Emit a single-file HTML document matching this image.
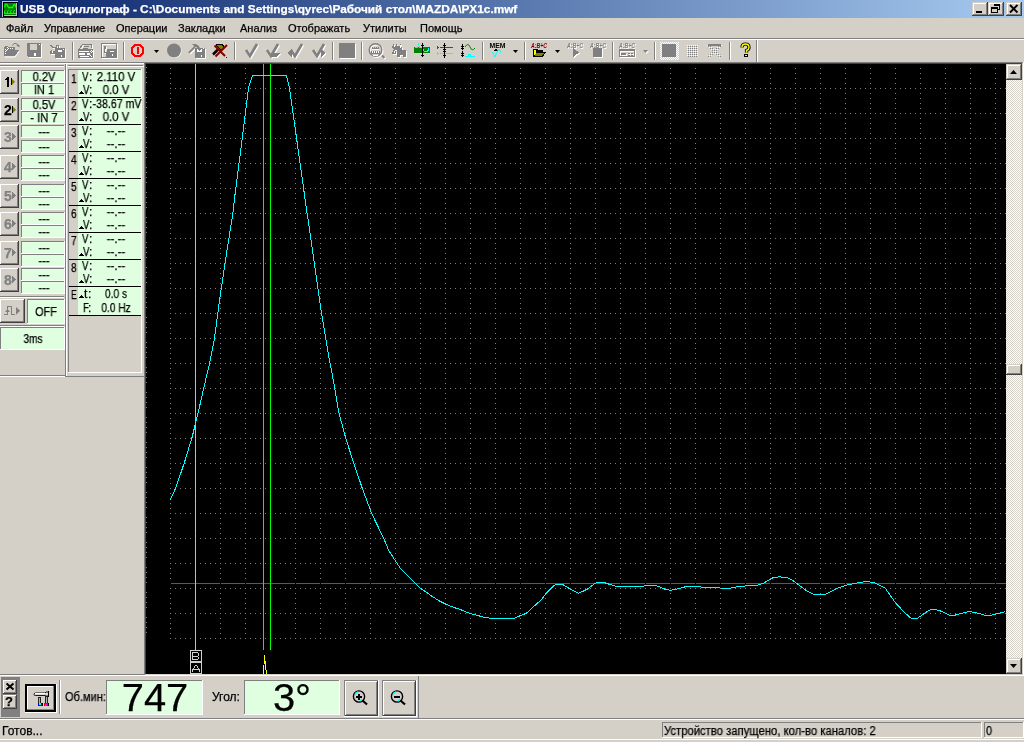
<!DOCTYPE html><html><head><meta charset="utf-8"><style>
*{margin:0;padding:0}
html,body{width:1024px;height:742px;overflow:hidden;background:#D4D0C8}
body>div,body>svg{position:absolute}
.t{position:absolute;white-space:nowrap;font-family:"Liberation Sans",sans-serif;will-change:transform;-webkit-text-stroke:0.25px currentColor}
</style></head><body><div style="left:0px;top:0px;width:1024px;height:742px;background:#D4D0C8;"></div><div style="left:0px;top:0px;width:1024px;height:18px;background:linear-gradient(to right,#0A246A,#A6CAF0);"></div><div style="left:2px;top:1px;width:16px;height:16px;background:#C0C0C0;"></div><div style="left:3px;top:2px;width:15px;height:15px;background:#000;"></div><div style="left:4px;top:3px;width:13px;height:13px;background:#C0C0C0;"></div><div style="left:4px;top:3px;width:12px;height:12px;background:#008000;"></div><svg style="left:2px;top:1px" width="16" height="16" viewBox="0 0 16 16" shape-rendering="crispEdges"><path d="M2.5 6.5l1-3h1.5l1.5 3h4l1.5-3h1l1 3" stroke="#00FF00" stroke-width="1.3" fill="none" shape-rendering="auto"/><rect x="2" y="12" width="11.5" height="1.4" fill="#00FF00"/><path d="M2.5 12.5v-2l1-1.5M5.5 12.5v-2l1-1.5M8.5 12.5v-2l1-1.5M11.5 12.5v-2l1-1.5" stroke="#00FF00" stroke-width="1" fill="none" shape-rendering="auto"/></svg><div class="t" style="left:20px;top:2px;font-size:11px;line-height:14px;color:#fff;font-weight:bold;transform:scaleX(1.074);transform-origin:0 0;">USB Осциллограф - C:\Documents and Settings\qyrec\Рабочий стол\MAZDA\PX1c.mwf</div><div style="left:972px;top:2px;width:16px;height:14px;background:#D4D0C8;"></div><div style="left:972px;top:2px;width:15px;height:1px;background:#D4D0C8;"></div><div style="left:972px;top:2px;width:1px;height:13px;background:#D4D0C8;"></div><div style="left:973px;top:3px;width:13px;height:1px;background:#FFFFFF;"></div><div style="left:973px;top:3px;width:1px;height:11px;background:#FFFFFF;"></div><div style="left:972px;top:15px;width:16px;height:1px;background:#404040;"></div><div style="left:987px;top:2px;width:1px;height:14px;background:#404040;"></div><div style="left:973px;top:14px;width:14px;height:1px;background:#808080;"></div><div style="left:986px;top:3px;width:1px;height:12px;background:#808080;"></div><div style="left:988px;top:2px;width:16px;height:14px;background:#D4D0C8;"></div><div style="left:988px;top:2px;width:15px;height:1px;background:#D4D0C8;"></div><div style="left:988px;top:2px;width:1px;height:13px;background:#D4D0C8;"></div><div style="left:989px;top:3px;width:13px;height:1px;background:#FFFFFF;"></div><div style="left:989px;top:3px;width:1px;height:11px;background:#FFFFFF;"></div><div style="left:988px;top:15px;width:16px;height:1px;background:#404040;"></div><div style="left:1003px;top:2px;width:1px;height:14px;background:#404040;"></div><div style="left:989px;top:14px;width:14px;height:1px;background:#808080;"></div><div style="left:1002px;top:3px;width:1px;height:12px;background:#808080;"></div><div style="left:1006px;top:2px;width:16px;height:14px;background:#D4D0C8;"></div><div style="left:1006px;top:2px;width:15px;height:1px;background:#D4D0C8;"></div><div style="left:1006px;top:2px;width:1px;height:13px;background:#D4D0C8;"></div><div style="left:1007px;top:3px;width:13px;height:1px;background:#FFFFFF;"></div><div style="left:1007px;top:3px;width:1px;height:11px;background:#FFFFFF;"></div><div style="left:1006px;top:15px;width:16px;height:1px;background:#404040;"></div><div style="left:1021px;top:2px;width:1px;height:14px;background:#404040;"></div><div style="left:1007px;top:14px;width:14px;height:1px;background:#808080;"></div><div style="left:1020px;top:3px;width:1px;height:12px;background:#808080;"></div><div style="left:976px;top:11px;width:6px;height:2px;background:#000;"></div><svg style="left:988px;top:2px" width="16" height="14" viewBox="0 0 16 14" shape-rendering="crispEdges"><path d="M6.5 4v-1.5h5v5h-2" stroke="#000" fill="none"/><rect x="6" y="2" width="6" height="2" fill="#000"/><rect x="3.5" y="5.5" width="6" height="5" stroke="#000" fill="none"/><rect x="3" y="5" width="7" height="2" fill="#000"/></svg><svg style="left:1006px;top:2px" width="16" height="14" viewBox="0 0 16 14" shape-rendering="crispEdges"><path d="M4 3l7.5 7.5M11.5 3l-7.5 7.5" stroke="#000" stroke-width="1.9" fill="none" shape-rendering="auto"/></svg><div class="t" style="left:6px;top:22px;font-size:11px;line-height:13px;color:#000;">Файл</div><div class="t" style="left:44px;top:22px;font-size:11px;line-height:13px;color:#000;">Управление</div><div class="t" style="left:116px;top:22px;font-size:11px;line-height:13px;color:#000;">Операции</div><div class="t" style="left:178px;top:22px;font-size:11px;line-height:13px;color:#000;">Закладки</div><div class="t" style="left:240px;top:22px;font-size:11px;line-height:13px;color:#000;">Анализ</div><div class="t" style="left:288px;top:22px;font-size:11px;line-height:13px;color:#000;">Отображать</div><div class="t" style="left:363px;top:22px;font-size:11px;line-height:13px;color:#000;">Утилиты</div><div class="t" style="left:420px;top:22px;font-size:11px;line-height:13px;color:#000;">Помощь</div><div style="left:0px;top:38px;width:1024px;height:1px;background:#808080;"></div><div style="left:0px;top:39px;width:1024px;height:1px;background:#FFFFFF;"></div><div style="left:0px;top:62px;width:1024px;height:1px;background:#808080;"></div><div style="left:0px;top:63px;width:144px;height:1px;background:#FFFFFF;"></div><div style="left:756px;top:40px;width:1px;height:22px;background:#808080;"></div><div style="left:757px;top:40px;width:1px;height:22px;background:#FFFFFF;"></div><div style="left:72px;top:42px;width:1px;height:18px;background:#808080;"></div><div style="left:73px;top:42px;width:1px;height:18px;background:#FFFFFF;"></div><div style="left:123px;top:42px;width:1px;height:18px;background:#808080;"></div><div style="left:124px;top:42px;width:1px;height:18px;background:#FFFFFF;"></div><div style="left:234px;top:42px;width:1px;height:18px;background:#808080;"></div><div style="left:235px;top:42px;width:1px;height:18px;background:#FFFFFF;"></div><div style="left:332px;top:42px;width:1px;height:18px;background:#808080;"></div><div style="left:333px;top:42px;width:1px;height:18px;background:#FFFFFF;"></div><div style="left:361px;top:42px;width:1px;height:18px;background:#808080;"></div><div style="left:362px;top:42px;width:1px;height:18px;background:#FFFFFF;"></div><div style="left:482px;top:42px;width:1px;height:18px;background:#808080;"></div><div style="left:483px;top:42px;width:1px;height:18px;background:#FFFFFF;"></div><div style="left:524px;top:42px;width:1px;height:18px;background:#808080;"></div><div style="left:525px;top:42px;width:1px;height:18px;background:#FFFFFF;"></div><div style="left:612px;top:42px;width:1px;height:18px;background:#808080;"></div><div style="left:613px;top:42px;width:1px;height:18px;background:#FFFFFF;"></div><div style="left:654px;top:42px;width:1px;height:18px;background:#808080;"></div><div style="left:655px;top:42px;width:1px;height:18px;background:#FFFFFF;"></div><div style="left:729px;top:42px;width:1px;height:18px;background:#808080;"></div><div style="left:730px;top:42px;width:1px;height:18px;background:#FFFFFF;"></div><svg style="left:0;top:0" width="760" height="64" shape-rendering="crispEdges"><defs><pattern id="dith" patternUnits="userSpaceOnUse" width="2" height="2"><rect width="2" height="2" fill="#D4D0C8"/><rect width="1" height="1" fill="#FFFFFF"/><rect x="1" y="1" width="1" height="1" fill="#FFFFFF"/></pattern><pattern id="dgr" patternUnits="userSpaceOnUse" width="2" height="2"><rect width="1" height="1" fill="#808080"/><rect x="1" y="1" width="1" height="1" fill="#FFFFFF"/></pattern></defs><path d="M5 57h10l4.5-6" stroke="#FFFFFF" fill="none" shape-rendering="auto"/><path d="M4 47h1v-1h3v1h7v3h4l-4 6h-11z" fill="#808080"/><path d="M5 49h1M7 47h1M10 48h1M12 48h1M5 51h1M5 53h1M7 49h1M6 50h1M8 48h1" stroke="#FFFFFF" fill="none"/><path d="M12.5 45.5l1.5-2h2l2.5 1.5" stroke="#808080" fill="none" shape-rendering="auto"/><path d="M16 45h3.5v2.5z" fill="#808080" shape-rendering="auto"/><g color="#FFFFFF" transform="translate(1,1)"><path d="M27 43h14v14h-13l-1-1z" fill="currentColor"/></g><g color="#808080"><path d="M27 43h14v14h-13l-1-1z" fill="currentColor"/></g><rect x="30" y="44" width="7" height="6" fill="#D4D0C8"/><rect x="34" y="53" width="2" height="3" fill="#FFFFFF"/><rect x="39" y="44" width="1" height="1" fill="#FFFFFF"/><g color="#FFFFFF" transform="translate(1,1)"><path d="M50 45h2v1h1v1h3v-2h3v3h-1v-2h-1v2h-5v-1h-1v-1h-1z" fill="currentColor"/><path d="M51 50h1v1h3v-1h1v4h-6v-3h1z" fill="currentColor"/><rect x="55" y="48" width="10" height="10" fill="currentColor"/></g><g color="#808080"><path d="M50 45h2v1h1v1h3v-2h3v3h-1v-2h-1v2h-5v-1h-1v-1h-1z" fill="currentColor"/><path d="M51 50h1v1h3v-1h1v4h-6v-3h1z" fill="currentColor"/><rect x="55" y="48" width="10" height="10" fill="currentColor"/></g><rect x="58" y="50" width="4" height="2" fill="#FFFFFF"/><rect x="63" y="49" width="1" height="1" fill="#FFFFFF"/><rect x="61" y="55" width="1" height="2" fill="#FFFFFF"/><rect x="52" y="51" width="1" height="2" fill="#FFFFFF"/><rect x="57" y="46" width="1" height="2" fill="#FFFFFF"/><rect x="80" y="58" width="13" height="1" fill="#FFFFFF"/><rect x="93" y="50" width="1" height="8" fill="#FFFFFF"/><path d="M92.5 45v3.5M80.5 50.5l3-5" stroke="#FFFFFF" fill="none"/><path d="M82 44h10v4h-1v-3h-8.4l-2.6 4h-1z" fill="#808080"/><rect x="84" y="46" width="5" height="1" fill="#808080"/><rect x="83" y="48" width="5" height="1" fill="#808080"/><rect x="78" y="49" width="15" height="9" fill="#808080"/><rect x="79" y="51" width="10" height="1" fill="#FFFFFF"/><rect x="79" y="53" width="6" height="2" fill="#FFFFFF"/><rect x="87" y="53" width="3" height="2" fill="#FFFFFF"/><rect x="80" y="56" width="9" height="1" fill="#FFFFFF"/><path d="M91 50h1M90 51h1M92 51h1M91 52h1M90 55h1M91 56h1" stroke="#FFFFFF" fill="none" transform="translate(0,0.5)"/><g color="#FFFFFF" transform="translate(1,1)"><rect x="101.5" y="43.5" width="15" height="14" fill="none" stroke="currentColor"/><path d="M107 49h9v8h-9z" fill="currentColor"/><path d="M104 46h2v3h-1v3h2v5h-1v-4h-2z" fill="currentColor"/></g><g color="#808080"><rect x="101.5" y="43.5" width="15" height="14" fill="none" stroke="currentColor"/><path d="M107 49h9v8h-9z" fill="currentColor"/><path d="M104 46h2v3h-1v3h2v5h-1v-4h-2z" fill="currentColor"/></g><rect x="110" y="51" width="4" height="1" fill="#FFFFFF"/><rect x="112" y="54" width="1" height="2" fill="#FFFFFF"/><path d="M135 45h5l3 3v5l-3 3h-5l-3-3v-5z" fill="none" stroke="#FF0000" stroke-width="2"/><rect x="137" y="47" width="2" height="7" fill="#FF0000"/><path d="M154 50h5l-2.5 3z" fill="#000" shape-rendering="auto"/><circle cx="174.5" cy="51" r="7" fill="#FFFFFF" shape-rendering="auto"/><circle cx="174" cy="50.5" r="7" fill="#808080" shape-rendering="auto"/><g color="#FFFFFF" transform="translate(1,1)"><path d="M192 44h4l3 2l1 2h-3l-1-1l-6.5 6.5l-1.3-1.3l6-6z" fill="currentColor" shape-rendering="auto"/><rect x="195" y="48" width="10" height="10" fill="currentColor"/></g><g color="#808080"><path d="M192 44h4l3 2l1 2h-3l-1-1l-6.5 6.5l-1.3-1.3l6-6z" fill="currentColor" shape-rendering="auto"/><rect x="195" y="48" width="10" height="10" fill="currentColor"/></g><path d="M197 49h1v1h1v1h1v-1h1v-1h1v3h-5z" fill="#FFFFFF"/><rect x="201" y="55" width="1" height="2" fill="#FFFFFF"/><rect x="203" y="48" width="1" height="1" fill="#FFFFFF"/><path d="M213 54.5l5-5" stroke="#000" stroke-width="2.6" shape-rendering="auto"/><path d="M213.5 54l4-4" stroke="#800000" stroke-width="0.8" stroke-dasharray="1 1" shape-rendering="auto"/><path d="M216 44h6l2 2v3l-2 1h-2l-4-4z" fill="#000"/><path d="M217 45h4l2 2v2h-2l-4-3z" fill="#808000"/><path d="M214.5 45.5l10.5 10.5M227 45l-11.5 11.5" stroke="#800000" stroke-width="2" shape-rendering="auto"/><rect x="226" y="57" width="1" height="1" fill="#800000"/><g color="#FFFFFF" transform="translate(1,1)"><path d="M246 50l4 6l7-12" stroke="currentColor" stroke-width="2.6" fill="none" shape-rendering="auto"/></g><g color="#808080"><path d="M246 50l4 6l7-12" stroke="currentColor" stroke-width="2.6" fill="none" shape-rendering="auto"/></g><g color="#FFFFFF" transform="translate(1,1)"><path d="M267 50l4 6l7-12" stroke="currentColor" stroke-width="2.6" fill="none" shape-rendering="auto"/><path d="M271 53h9l-3 4h-6z" fill="currentColor"/></g><g color="#808080"><path d="M267 50l4 6l7-12" stroke="currentColor" stroke-width="2.6" fill="none" shape-rendering="auto"/><path d="M271 53h9l-3 4h-6z" fill="currentColor"/></g><g color="#FFFFFF" transform="translate(1,1)"><path d="M291 50l4 6l7-12" stroke="currentColor" stroke-width="2.6" fill="none" shape-rendering="auto"/><path d="M287 53l5-4v8z" fill="currentColor"/></g><g color="#808080"><path d="M291 50l4 6l7-12" stroke="currentColor" stroke-width="2.6" fill="none" shape-rendering="auto"/><path d="M287 53l5-4v8z" fill="currentColor"/></g><g color="#FFFFFF" transform="translate(1,1)"><path d="M313 50l4 6l7-12" stroke="currentColor" stroke-width="2.6" fill="none" shape-rendering="auto"/><path d="M321 49l5 4l-5 4z" fill="currentColor"/></g><g color="#808080"><path d="M313 50l4 6l7-12" stroke="currentColor" stroke-width="2.6" fill="none" shape-rendering="auto"/><path d="M321 49l5 4l-5 4z" fill="currentColor"/></g><g color="#FFFFFF" transform="translate(1,1)"><rect x="339" y="43" width="16" height="15" fill="currentColor"/></g><g color="#808080"><rect x="339" y="43" width="16" height="15" fill="currentColor"/></g><g color="#FFFFFF" transform="translate(1,1)"><circle cx="375.5" cy="50" r="6.3" fill="none" stroke="currentColor" stroke-width="1.4" shape-rendering="auto"/><path d="M382 55.5l2.5 2.5" stroke="currentColor" stroke-width="2" shape-rendering="auto"/></g><g color="#808080"><circle cx="375.5" cy="50" r="6.3" fill="none" stroke="currentColor" stroke-width="1.4" shape-rendering="auto"/><path d="M382 55.5l2.5 2.5" stroke="currentColor" stroke-width="2" shape-rendering="auto"/></g><path d="M372 46.5h1v1h1v-1h1v1h1v-1h1v1h1v-1h1v2h-7z" fill="#808080"/><rect x="372" y="49" width="7" height="1" fill="#FFFFFF"/><path d="M371 51h9v3h-9z" fill="#808080"/><path d="M372.5 51v2M374.5 51v2M376.5 51v2M378.5 51v2" stroke="#FFFFFF"/><rect x="373" y="55" width="5" height="1" fill="#FFFFFF"/><g color="#FFFFFF" transform="translate(1,1)"><path d="M393 44h1v2h2v-2h1v2h3v-2h1v3h1v3h4v7h-3v-2h-3v2h-3v-7h-3v-1h-1v-1h-1z" fill="currentColor"/><path d="M393 50h2v1h1v3h-4v-2h1z" fill="currentColor"/></g><g color="#808080"><path d="M393 44h1v2h2v-2h1v2h3v-2h1v3h1v3h4v7h-3v-2h-3v2h-3v-7h-3v-1h-1v-1h-1z" fill="currentColor"/><path d="M393 50h2v1h1v3h-4v-2h1z" fill="currentColor"/></g><path d="M394 46.5h1M400.5 45v3M394.5 51v2" stroke="#FFFFFF"/><rect x="414" y="47" width="16" height="6" fill="#008000"/><path d="M414.5 47.5h3l1-3l1 3h2l3 4h3l1.5 -3" stroke="#00FFFF" fill="none"/><path d="M422.5 43v14M421 45h3M421 55h3" stroke="#000" fill="none"/><path d="M437 46v3l2-1.5z" fill="#008000"/><rect x="440" y="47" width="13" height="1" fill="#008000"/><path d="M437 52v3l2-1.5z" fill="#00FFFF"/><rect x="440" y="53" width="13" height="1" fill="#00FFFF"/><path d="M444.5 43v15M443 45h3M443 49h3M443 51h3M443 55h3" stroke="#000" fill="none"/><path d="M462.5 44v6M462.5 51v6M461 46h3M461 48h3M461 53h3M461 55h3" stroke="#000" fill="none"/><path d="M465 47q3-5 5 0t5 1" stroke="#008000" fill="none" shape-rendering="auto"/><path d="M465 56.5h3v-2h2v2h5" stroke="#00FFFF" fill="none"/><text x="489.5" y="48" font-family="Liberation Sans" font-size="6.5" font-weight="bold" fill="#000" textLength="16" lengthAdjust="spacingAndGlyphs">MEM</text><path d="M493 51h5l-2.5-2.5z" fill="#000"/><path d="M492.5 52l2.5 5l2-5l2 -3l2 4" stroke="#00FFFF" fill="none" shape-rendering="auto"/><path d="M513 50h5l-2.5 3z" fill="#000" shape-rendering="auto"/><text x="531" y="48" font-family="Liberation Sans" font-size="6.5" font-weight="bold" font-style="italic" fill="#800000" textLength="16" lengthAdjust="spacingAndGlyphs">A:B+C</text><path d="M533 49h4l1 1h5v2h3l-3 5h-10z" fill="#000"/><path d="M534 50h2v5h-2z" fill="#FFFF00"/><path d="M536 53h8l-2 3h-7z" fill="#808000"/><path d="M555 50h5l-2.5 3z" fill="#000" shape-rendering="auto"/><g color="#FFFFFF" transform="translate(1,1)"><text x="567" y="48" font-family="Liberation Sans" font-size="6.5" font-weight="bold" font-style="italic" fill="currentColor" textLength="16" lengthAdjust="spacingAndGlyphs">A:B+C</text><path d="M573 48l6 4.5l-6 4.5z" fill="currentColor"/></g><g color="#808080"><text x="567" y="48" font-family="Liberation Sans" font-size="6.5" font-weight="bold" font-style="italic" fill="currentColor" textLength="16" lengthAdjust="spacingAndGlyphs">A:B+C</text><path d="M573 48l6 4.5l-6 4.5z" fill="currentColor"/></g><g color="#FFFFFF" transform="translate(1,1)"><text x="590" y="48" font-family="Liberation Sans" font-size="6.5" font-weight="bold" font-style="italic" fill="currentColor" textLength="16" lengthAdjust="spacingAndGlyphs">A:B+C</text><rect x="593" y="48" width="9" height="9" fill="currentColor"/></g><g color="#808080"><text x="590" y="48" font-family="Liberation Sans" font-size="6.5" font-weight="bold" font-style="italic" fill="currentColor" textLength="16" lengthAdjust="spacingAndGlyphs">A:B+C</text><rect x="593" y="48" width="9" height="9" fill="currentColor"/></g><g color="#FFFFFF" transform="translate(1,1)"><text x="619" y="48" font-family="Liberation Sans" font-size="6.5" font-weight="bold" font-style="italic" fill="currentColor" textLength="16" lengthAdjust="spacingAndGlyphs">A:B+C</text><rect x="619.5" y="49.5" width="15" height="7" fill="none" stroke="currentColor"/><rect x="619" y="49" width="16" height="2" fill="currentColor"/><rect x="621" y="53" width="5" height="2" fill="currentColor"/><path d="M628 53h2M631 53h2M628 55h2M631 55h2" stroke="currentColor"/></g><g color="#808080"><text x="619" y="48" font-family="Liberation Sans" font-size="6.5" font-weight="bold" font-style="italic" fill="currentColor" textLength="16" lengthAdjust="spacingAndGlyphs">A:B+C</text><rect x="619.5" y="49.5" width="15" height="7" fill="none" stroke="currentColor"/><rect x="619" y="49" width="16" height="2" fill="currentColor"/><rect x="621" y="53" width="5" height="2" fill="currentColor"/><path d="M628 53h2M631 53h2M628 55h2M631 55h2" stroke="currentColor"/></g><g color="#FFFFFF" transform="translate(1,1)"><path d="M643 50h5l-2.5 3z" fill="currentColor" shape-rendering="auto"/></g><g color="#808080"><path d="M643 50h5l-2.5 3z" fill="currentColor" shape-rendering="auto"/></g><rect x="660" y="42" width="19" height="18" fill="url(#dith)"/><rect x="662" y="44" width="14" height="13" fill="#808080"/><rect x="687" y="45" width="11" height="12" fill="url(#dgr)"/><path d="M708 45l13 12M721 45l-13 12" stroke="url(#dgr)" stroke-width="3" shape-rendering="auto"/><path d="M708 45h13" stroke="#808080" stroke-width="2"/><path d="M742 47.5q0-3.5 3.5-3.5t3.5 3.5q0 2-2.5 3v2" stroke="#000" stroke-width="3.2" fill="none" shape-rendering="auto"/><path d="M742 47.5q0-3.5 3.5-3.5t3.5 3.5q0 2-2.5 3v2" stroke="#FFFF00" stroke-width="1.4" fill="none" shape-rendering="auto"/><rect x="744" y="54" width="4" height="3" fill="#000"/><rect x="745" y="55" width="2" height="1" fill="#FFFF00"/></svg><div style="left:144px;top:62px;width:880px;height:1px;background:#808080;"></div><div style="left:144px;top:62px;width:1px;height:613px;background:#808080;"></div><div style="left:145px;top:63px;width:878px;height:1px;background:#404040;"></div><div style="left:145px;top:63px;width:1px;height:611px;background:#404040;"></div><div style="left:146px;top:64px;width:860px;height:610px;background:#000;"></div><div style="left:145px;top:674px;width:878px;height:1px;background:#D4D0C8;"></div><div style="left:144px;top:675px;width:880px;height:1px;background:#FFFFFF;"></div><div style="left:1022px;top:63px;width:1px;height:612px;background:#D4D0C8;"></div><div style="left:1023px;top:62px;width:1px;height:614px;background:#FFFFFF;"></div><svg style="left:0;top:0" width="1024" height="742" shape-rendering="crispEdges"><defs><pattern id="ph" patternUnits="userSpaceOnUse" x="170" y="88" width="5" height="25"><rect width="1" height="1" fill="#808080"/></pattern><pattern id="pv" patternUnits="userSpaceOnUse" x="170" y="68" width="25" height="5"><rect width="1" height="1" fill="#808080"/></pattern><pattern id="pl" patternUnits="userSpaceOnUse" x="146" y="67" width="1" height="25"><rect y="0" width="1" height="1" fill="#808080"/><rect y="5" width="1" height="1" fill="#808080"/><rect y="10" width="1" height="1" fill="#808080"/><rect y="15" width="1" height="1" fill="#808080"/></pattern><pattern id="pc" patternUnits="userSpaceOnUse" x="195" y="68" width="1" height="5"><rect width="1" height="1" fill="#00FFFF"/></pattern></defs><rect x="170" y="88" width="836" height="551" fill="url(#ph)"/><rect x="170" y="68" width="826" height="571" fill="url(#pv)"/><rect x="146" y="67" width="1" height="566" fill="url(#pl)"/><rect x="171" y="583" width="835" height="1" fill="#008080"/><rect x="170" y="583" width="1" height="1" fill="#000"/><rect x="195" y="583" width="1" height="1" fill="#000"/><rect x="220" y="583" width="1" height="1" fill="#000"/><rect x="245" y="583" width="1" height="1" fill="#000"/><rect x="270" y="583" width="1" height="1" fill="#000"/><rect x="295" y="583" width="1" height="1" fill="#000"/><rect x="320" y="583" width="1" height="1" fill="#000"/><rect x="345" y="583" width="1" height="1" fill="#000"/><rect x="370" y="583" width="1" height="1" fill="#000"/><rect x="395" y="583" width="1" height="1" fill="#000"/><rect x="420" y="583" width="1" height="1" fill="#000"/><rect x="445" y="583" width="1" height="1" fill="#000"/><rect x="470" y="583" width="1" height="1" fill="#000"/><rect x="495" y="583" width="1" height="1" fill="#000"/><rect x="520" y="583" width="1" height="1" fill="#000"/><rect x="545" y="583" width="1" height="1" fill="#000"/><rect x="570" y="583" width="1" height="1" fill="#000"/><rect x="595" y="583" width="1" height="1" fill="#000"/><rect x="620" y="583" width="1" height="1" fill="#000"/><rect x="645" y="583" width="1" height="1" fill="#000"/><rect x="670" y="583" width="1" height="1" fill="#000"/><rect x="695" y="583" width="1" height="1" fill="#000"/><rect x="720" y="583" width="1" height="1" fill="#000"/><rect x="745" y="583" width="1" height="1" fill="#000"/><rect x="770" y="583" width="1" height="1" fill="#000"/><rect x="795" y="583" width="1" height="1" fill="#000"/><rect x="820" y="583" width="1" height="1" fill="#000"/><rect x="845" y="583" width="1" height="1" fill="#000"/><rect x="870" y="583" width="1" height="1" fill="#000"/><rect x="895" y="583" width="1" height="1" fill="#000"/><rect x="920" y="583" width="1" height="1" fill="#000"/><rect x="945" y="583" width="1" height="1" fill="#000"/><rect x="970" y="583" width="1" height="1" fill="#000"/><rect x="995" y="583" width="1" height="1" fill="#000"/><rect x="195" y="64" width="1" height="586" fill="#C0C0C0"/><rect x="195" y="68" width="1" height="571" fill="url(#pc)"/><rect x="263" y="64" width="1" height="586" fill="#00FF00"/><rect x="270" y="64" width="1" height="586" fill="#00FF00"/><polyline points="170.1,500.1 175.7,488.0 184.2,463.1 191.9,438.0 198.1,413.0 203.7,388.2 209.7,362.8 214.5,338.2 219.6,300.0 225.5,260.0 232.9,213.0 234.3,200.0 243.3,130.0 248.5,88.0 252.6,75.5 286.5,75.5 289.5,88.0 295.4,130.0 305.2,200.0 321.5,313.0 329.4,360.0 333.3,380.0 338.9,412.8 346.0,439.2 354.0,463.8 362.3,488.3 371.7,513.6 383.8,538.5 388.5,550.0 395.1,560.4 400.8,568.9 408.3,576.4 415.4,583.5 419.6,587.7 425.3,591.5 431.9,596.2 438.5,600.5 446.0,604.2 453.6,607.4 460.0,609.4 469.3,613.2 483.9,617.2 490.5,618.3 514.0,618.3 526.4,613.2 535.2,605.2 541.0,600.0 545.5,594.2 554.3,585.4 556.4,584.2 562.3,584.2 568.9,588.3 578.4,593.4 587.3,589.2 594.6,583.6 597.6,582.3 603.4,582.3 615.2,586.2 643.7,586.2 645.2,585.2 655.4,585.2 665.0,589.2 670.8,590.3 682.5,587.7 687.0,586.2 698.6,586.2 701.6,587.4 717.7,587.4 720.0,588.0 730.3,588.1 739.0,586.5 758.0,585.0 764.0,582.9 772.7,577.9 779.3,576.7 787.4,577.9 791.8,579.6 797.6,584.0 806.4,590.6 813.7,594.3 825.5,594.3 837.2,588.4 846.0,585.2 860.6,582.3 867.3,581.4 874.6,582.9 884.9,587.7 895.2,602.4 903.9,611.9 911.3,618.5 917.1,618.5 928.8,610.4 933.2,609.2 939.1,610.4 949.4,615.1 955.2,615.1 965.5,612.2 969.9,611.6 975.7,612.6 984.5,615.1 991.8,615.1 1005.5,611.6" fill="none" stroke="#00FFFF" stroke-width="1" shape-rendering="crispEdges"/><rect x="190.5" y="650.5" width="11" height="11" rx="1" fill="none" stroke="#D0D0D0"/><rect x="190.5" y="662.5" width="11" height="11" rx="1" fill="none" stroke="#D0D0D0"/><path d="M192.5 652v8M192 652.5h5.5M192 656.5h5.5M192 659.5h5.5M198.5 653v3M198.5 657v2" stroke="#D0D0D0" fill="none"/><path d="M192.5 672v-1.5l3-5.5h1l3 5.5v1.5M193 669.5h6" stroke="#D0D0D0" fill="none"/><path d="M264.5 655v9M265.5 661v9M263.5 665v9M266.5 670v4" stroke="#FFFF00" fill="none"/></svg><div style="left:1006px;top:64px;width:16px;height:610px;background:repeating-conic-gradient(#FFFFFF 0 25%,#D4D0C8 0 50%) 0 0/2px 2px;"></div><div style="left:1006px;top:64px;width:16px;height:16px;background:#D4D0C8;"></div><div style="left:1006px;top:64px;width:15px;height:1px;background:#D4D0C8;"></div><div style="left:1006px;top:64px;width:1px;height:15px;background:#D4D0C8;"></div><div style="left:1007px;top:65px;width:13px;height:1px;background:#FFFFFF;"></div><div style="left:1007px;top:65px;width:1px;height:13px;background:#FFFFFF;"></div><div style="left:1006px;top:79px;width:16px;height:1px;background:#404040;"></div><div style="left:1021px;top:64px;width:1px;height:16px;background:#404040;"></div><div style="left:1007px;top:78px;width:14px;height:1px;background:#808080;"></div><div style="left:1020px;top:65px;width:1px;height:14px;background:#808080;"></div><svg style="left:1006px;top:64px" width="16" height="16" viewBox="0 0 16 16" shape-rendering="crispEdges"><path d="M4 10h7l-3.5-4z" fill="#000" shape-rendering="auto"/></svg><div style="left:1006px;top:364px;width:16px;height:11px;background:#D4D0C8;"></div><div style="left:1006px;top:364px;width:15px;height:1px;background:#D4D0C8;"></div><div style="left:1006px;top:364px;width:1px;height:10px;background:#D4D0C8;"></div><div style="left:1007px;top:365px;width:13px;height:1px;background:#FFFFFF;"></div><div style="left:1007px;top:365px;width:1px;height:8px;background:#FFFFFF;"></div><div style="left:1006px;top:374px;width:16px;height:1px;background:#404040;"></div><div style="left:1021px;top:364px;width:1px;height:11px;background:#404040;"></div><div style="left:1007px;top:373px;width:14px;height:1px;background:#808080;"></div><div style="left:1020px;top:365px;width:1px;height:9px;background:#808080;"></div><div style="left:1006px;top:658px;width:16px;height:16px;background:#D4D0C8;"></div><div style="left:1006px;top:658px;width:15px;height:1px;background:#D4D0C8;"></div><div style="left:1006px;top:658px;width:1px;height:15px;background:#D4D0C8;"></div><div style="left:1007px;top:659px;width:13px;height:1px;background:#FFFFFF;"></div><div style="left:1007px;top:659px;width:1px;height:13px;background:#FFFFFF;"></div><div style="left:1006px;top:673px;width:16px;height:1px;background:#404040;"></div><div style="left:1021px;top:658px;width:1px;height:16px;background:#404040;"></div><div style="left:1007px;top:672px;width:14px;height:1px;background:#808080;"></div><div style="left:1020px;top:659px;width:1px;height:14px;background:#808080;"></div><svg style="left:1006px;top:658px" width="16" height="16" viewBox="0 0 16 16" shape-rendering="crispEdges"><path d="M4 6h7l-3.5 4z" fill="#000" shape-rendering="auto"/></svg><div style="left:0px;top:65px;width:64px;height:1px;background:#808080;"></div><div style="left:0px;top:66px;width:64px;height:1px;background:#FFFFFF;"></div><div style="left:68px;top:65px;width:75px;height:1px;background:#808080;"></div><div style="left:68px;top:66px;width:76px;height:1px;background:#FFFFFF;"></div><div style="left:65px;top:64px;width:1px;height:312px;background:#808080;"></div><div style="left:66px;top:64px;width:1px;height:312px;background:#FFFFFF;"></div><div style="left:0px;top:70px;width:19px;height:24px;background:#D4D0C8;"></div><div style="left:0px;top:70px;width:18px;height:1px;background:#FFFFFF;"></div><div style="left:0px;top:70px;width:1px;height:23px;background:#FFFFFF;"></div><div style="left:0px;top:93px;width:19px;height:1px;background:#404040;"></div><div style="left:18px;top:70px;width:1px;height:24px;background:#404040;"></div><div style="left:1px;top:92px;width:17px;height:1px;background:#808080;"></div><div style="left:17px;top:71px;width:1px;height:22px;background:#808080;"></div><svg style="left:0px;top:70px" width="19" height="24" viewBox="0 0 19 24" shape-rendering="crispEdges"><rect x="7" y="7" width="2" height="10" fill="#000"/><rect x="5" y="9" width="2" height="1" fill="#000"/><rect x="6" y="8" width="1" height="1" fill="#000"/></svg><svg style="left:11px;top:78px" width="5" height="8" viewBox="0 0 5 8" shape-rendering="crispEdges"><path d="M0.5 0v7" stroke="#000"/><path d="M1 1l3.2 2.8l-3.2 3z" fill="#808000" shape-rendering="auto"/></svg><div style="left:21px;top:70px;width:44px;height:13px;background:#E0FFE0;"></div><div style="left:21px;top:70px;width:43px;height:1px;background:#808080;"></div><div style="left:21px;top:70px;width:1px;height:12px;background:#808080;"></div><div style="left:21px;top:82px;width:44px;height:1px;background:#FFFFFF;"></div><div style="left:64px;top:70px;width:1px;height:13px;background:#FFFFFF;"></div><div style="left:21px;top:83px;width:44px;height:13px;background:#E0FFE0;"></div><div style="left:21px;top:83px;width:43px;height:1px;background:#808080;"></div><div style="left:21px;top:83px;width:1px;height:12px;background:#808080;"></div><div style="left:21px;top:95px;width:44px;height:1px;background:#FFFFFF;"></div><div style="left:64px;top:83px;width:1px;height:13px;background:#FFFFFF;"></div><div class="t" style="left:3.5px;top:70px;width:80px;text-align:center;font-size:12px;line-height:14px;color:#000;transform:scaleX(0.93);">0.2V</div><div class="t" style="left:3.5px;top:83px;width:80px;text-align:center;font-size:12px;line-height:14px;color:#000;transform:scaleX(0.93);">IN 1</div><div style="left:0px;top:98px;width:19px;height:24px;background:#D4D0C8;"></div><div style="left:0px;top:98px;width:18px;height:1px;background:#FFFFFF;"></div><div style="left:0px;top:98px;width:1px;height:23px;background:#FFFFFF;"></div><div style="left:0px;top:121px;width:19px;height:1px;background:#404040;"></div><div style="left:18px;top:98px;width:1px;height:24px;background:#404040;"></div><div style="left:1px;top:120px;width:17px;height:1px;background:#808080;"></div><div style="left:17px;top:99px;width:1px;height:22px;background:#808080;"></div><div class="t" style="left:4px;top:102px;font-size:14px;line-height:16px;color:#000;font-weight:bold;">2</div><svg style="left:12px;top:106px" width="5" height="8" viewBox="0 0 5 8" shape-rendering="crispEdges"><path d="M0.5 0v7" stroke="#000"/><path d="M1 1l3.2 2.8l-3.2 3z" fill="#808000" shape-rendering="auto"/></svg><div style="left:21px;top:98px;width:44px;height:13px;background:#E0FFE0;"></div><div style="left:21px;top:98px;width:43px;height:1px;background:#808080;"></div><div style="left:21px;top:98px;width:1px;height:12px;background:#808080;"></div><div style="left:21px;top:110px;width:44px;height:1px;background:#FFFFFF;"></div><div style="left:64px;top:98px;width:1px;height:13px;background:#FFFFFF;"></div><div style="left:21px;top:111px;width:44px;height:13px;background:#E0FFE0;"></div><div style="left:21px;top:111px;width:43px;height:1px;background:#808080;"></div><div style="left:21px;top:111px;width:1px;height:12px;background:#808080;"></div><div style="left:21px;top:123px;width:44px;height:1px;background:#FFFFFF;"></div><div style="left:64px;top:111px;width:1px;height:13px;background:#FFFFFF;"></div><div class="t" style="left:3.5px;top:98px;width:80px;text-align:center;font-size:12px;line-height:14px;color:#000;transform:scaleX(0.93);">0.5V</div><div class="t" style="left:3.5px;top:111px;width:80px;text-align:center;font-size:12px;line-height:14px;color:#000;transform:scaleX(0.93);">- IN 7</div><div style="left:0px;top:125px;width:19px;height:24px;background:#D4D0C8;"></div><div style="left:0px;top:125px;width:18px;height:1px;background:#FFFFFF;"></div><div style="left:0px;top:125px;width:1px;height:23px;background:#FFFFFF;"></div><div style="left:0px;top:148px;width:19px;height:1px;background:#404040;"></div><div style="left:18px;top:125px;width:1px;height:24px;background:#404040;"></div><div style="left:1px;top:147px;width:17px;height:1px;background:#808080;"></div><div style="left:17px;top:126px;width:1px;height:22px;background:#808080;"></div><div class="t" style="left:4px;top:129px;font-size:14px;line-height:16px;color:#808080;font-weight:bold;">3</div><svg style="left:12px;top:133px" width="5" height="7" viewBox="0 0 5 7" shape-rendering="crispEdges"><path d="M0 0l4 3.5l-4 3.5z" fill="#808080"/></svg><div style="left:21px;top:125px;width:44px;height:13px;background:#E0FFE0;"></div><div style="left:21px;top:125px;width:43px;height:1px;background:#808080;"></div><div style="left:21px;top:125px;width:1px;height:12px;background:#808080;"></div><div style="left:21px;top:137px;width:44px;height:1px;background:#FFFFFF;"></div><div style="left:64px;top:125px;width:1px;height:13px;background:#FFFFFF;"></div><div style="left:21px;top:140px;width:44px;height:13px;background:#E0FFE0;"></div><div style="left:21px;top:140px;width:43px;height:1px;background:#808080;"></div><div style="left:21px;top:140px;width:1px;height:12px;background:#808080;"></div><div style="left:21px;top:152px;width:44px;height:1px;background:#FFFFFF;"></div><div style="left:64px;top:140px;width:1px;height:13px;background:#FFFFFF;"></div><div class="t" style="left:3.5px;top:125px;width:80px;text-align:center;font-size:12px;line-height:14px;color:#000;transform:scaleX(0.93);">---</div><div class="t" style="left:3.5px;top:140px;width:80px;text-align:center;font-size:12px;line-height:14px;color:#000;transform:scaleX(0.93);">---</div><div style="left:0px;top:155px;width:19px;height:24px;background:#D4D0C8;"></div><div style="left:0px;top:155px;width:18px;height:1px;background:#FFFFFF;"></div><div style="left:0px;top:155px;width:1px;height:23px;background:#FFFFFF;"></div><div style="left:0px;top:178px;width:19px;height:1px;background:#404040;"></div><div style="left:18px;top:155px;width:1px;height:24px;background:#404040;"></div><div style="left:1px;top:177px;width:17px;height:1px;background:#808080;"></div><div style="left:17px;top:156px;width:1px;height:22px;background:#808080;"></div><div class="t" style="left:4px;top:159px;font-size:14px;line-height:16px;color:#808080;font-weight:bold;">4</div><svg style="left:12px;top:163px" width="5" height="7" viewBox="0 0 5 7" shape-rendering="crispEdges"><path d="M0 0l4 3.5l-4 3.5z" fill="#808080"/></svg><div style="left:21px;top:155px;width:44px;height:13px;background:#E0FFE0;"></div><div style="left:21px;top:155px;width:43px;height:1px;background:#808080;"></div><div style="left:21px;top:155px;width:1px;height:12px;background:#808080;"></div><div style="left:21px;top:167px;width:44px;height:1px;background:#FFFFFF;"></div><div style="left:64px;top:155px;width:1px;height:13px;background:#FFFFFF;"></div><div style="left:21px;top:168px;width:44px;height:13px;background:#E0FFE0;"></div><div style="left:21px;top:168px;width:43px;height:1px;background:#808080;"></div><div style="left:21px;top:168px;width:1px;height:12px;background:#808080;"></div><div style="left:21px;top:180px;width:44px;height:1px;background:#FFFFFF;"></div><div style="left:64px;top:168px;width:1px;height:13px;background:#FFFFFF;"></div><div class="t" style="left:3.5px;top:155px;width:80px;text-align:center;font-size:12px;line-height:14px;color:#000;transform:scaleX(0.93);">---</div><div class="t" style="left:3.5px;top:168px;width:80px;text-align:center;font-size:12px;line-height:14px;color:#000;transform:scaleX(0.93);">---</div><div style="left:0px;top:184px;width:19px;height:24px;background:#D4D0C8;"></div><div style="left:0px;top:184px;width:18px;height:1px;background:#FFFFFF;"></div><div style="left:0px;top:184px;width:1px;height:23px;background:#FFFFFF;"></div><div style="left:0px;top:207px;width:19px;height:1px;background:#404040;"></div><div style="left:18px;top:184px;width:1px;height:24px;background:#404040;"></div><div style="left:1px;top:206px;width:17px;height:1px;background:#808080;"></div><div style="left:17px;top:185px;width:1px;height:22px;background:#808080;"></div><div class="t" style="left:4px;top:188px;font-size:14px;line-height:16px;color:#808080;font-weight:bold;">5</div><svg style="left:12px;top:192px" width="5" height="7" viewBox="0 0 5 7" shape-rendering="crispEdges"><path d="M0 0l4 3.5l-4 3.5z" fill="#808080"/></svg><div style="left:21px;top:184px;width:44px;height:13px;background:#E0FFE0;"></div><div style="left:21px;top:184px;width:43px;height:1px;background:#808080;"></div><div style="left:21px;top:184px;width:1px;height:12px;background:#808080;"></div><div style="left:21px;top:196px;width:44px;height:1px;background:#FFFFFF;"></div><div style="left:64px;top:184px;width:1px;height:13px;background:#FFFFFF;"></div><div style="left:21px;top:197px;width:44px;height:13px;background:#E0FFE0;"></div><div style="left:21px;top:197px;width:43px;height:1px;background:#808080;"></div><div style="left:21px;top:197px;width:1px;height:12px;background:#808080;"></div><div style="left:21px;top:209px;width:44px;height:1px;background:#FFFFFF;"></div><div style="left:64px;top:197px;width:1px;height:13px;background:#FFFFFF;"></div><div class="t" style="left:3.5px;top:184px;width:80px;text-align:center;font-size:12px;line-height:14px;color:#000;transform:scaleX(0.93);">---</div><div class="t" style="left:3.5px;top:197px;width:80px;text-align:center;font-size:12px;line-height:14px;color:#000;transform:scaleX(0.93);">---</div><div style="left:0px;top:212px;width:19px;height:24px;background:#D4D0C8;"></div><div style="left:0px;top:212px;width:18px;height:1px;background:#FFFFFF;"></div><div style="left:0px;top:212px;width:1px;height:23px;background:#FFFFFF;"></div><div style="left:0px;top:235px;width:19px;height:1px;background:#404040;"></div><div style="left:18px;top:212px;width:1px;height:24px;background:#404040;"></div><div style="left:1px;top:234px;width:17px;height:1px;background:#808080;"></div><div style="left:17px;top:213px;width:1px;height:22px;background:#808080;"></div><div class="t" style="left:4px;top:216px;font-size:14px;line-height:16px;color:#808080;font-weight:bold;">6</div><svg style="left:12px;top:220px" width="5" height="7" viewBox="0 0 5 7" shape-rendering="crispEdges"><path d="M0 0l4 3.5l-4 3.5z" fill="#808080"/></svg><div style="left:21px;top:212px;width:44px;height:13px;background:#E0FFE0;"></div><div style="left:21px;top:212px;width:43px;height:1px;background:#808080;"></div><div style="left:21px;top:212px;width:1px;height:12px;background:#808080;"></div><div style="left:21px;top:224px;width:44px;height:1px;background:#FFFFFF;"></div><div style="left:64px;top:212px;width:1px;height:13px;background:#FFFFFF;"></div><div style="left:21px;top:225px;width:44px;height:13px;background:#E0FFE0;"></div><div style="left:21px;top:225px;width:43px;height:1px;background:#808080;"></div><div style="left:21px;top:225px;width:1px;height:12px;background:#808080;"></div><div style="left:21px;top:237px;width:44px;height:1px;background:#FFFFFF;"></div><div style="left:64px;top:225px;width:1px;height:13px;background:#FFFFFF;"></div><div class="t" style="left:3.5px;top:212px;width:80px;text-align:center;font-size:12px;line-height:14px;color:#000;transform:scaleX(0.93);">---</div><div class="t" style="left:3.5px;top:225px;width:80px;text-align:center;font-size:12px;line-height:14px;color:#000;transform:scaleX(0.93);">---</div><div style="left:0px;top:241px;width:19px;height:24px;background:#D4D0C8;"></div><div style="left:0px;top:241px;width:18px;height:1px;background:#FFFFFF;"></div><div style="left:0px;top:241px;width:1px;height:23px;background:#FFFFFF;"></div><div style="left:0px;top:264px;width:19px;height:1px;background:#404040;"></div><div style="left:18px;top:241px;width:1px;height:24px;background:#404040;"></div><div style="left:1px;top:263px;width:17px;height:1px;background:#808080;"></div><div style="left:17px;top:242px;width:1px;height:22px;background:#808080;"></div><div class="t" style="left:4px;top:245px;font-size:14px;line-height:16px;color:#808080;font-weight:bold;">7</div><svg style="left:12px;top:249px" width="5" height="7" viewBox="0 0 5 7" shape-rendering="crispEdges"><path d="M0 0l4 3.5l-4 3.5z" fill="#808080"/></svg><div style="left:21px;top:241px;width:44px;height:13px;background:#E0FFE0;"></div><div style="left:21px;top:241px;width:43px;height:1px;background:#808080;"></div><div style="left:21px;top:241px;width:1px;height:12px;background:#808080;"></div><div style="left:21px;top:253px;width:44px;height:1px;background:#FFFFFF;"></div><div style="left:64px;top:241px;width:1px;height:13px;background:#FFFFFF;"></div><div style="left:21px;top:254px;width:44px;height:13px;background:#E0FFE0;"></div><div style="left:21px;top:254px;width:43px;height:1px;background:#808080;"></div><div style="left:21px;top:254px;width:1px;height:12px;background:#808080;"></div><div style="left:21px;top:266px;width:44px;height:1px;background:#FFFFFF;"></div><div style="left:64px;top:254px;width:1px;height:13px;background:#FFFFFF;"></div><div class="t" style="left:3.5px;top:241px;width:80px;text-align:center;font-size:12px;line-height:14px;color:#000;transform:scaleX(0.93);">---</div><div class="t" style="left:3.5px;top:254px;width:80px;text-align:center;font-size:12px;line-height:14px;color:#000;transform:scaleX(0.93);">---</div><div style="left:0px;top:268px;width:19px;height:24px;background:#D4D0C8;"></div><div style="left:0px;top:268px;width:18px;height:1px;background:#FFFFFF;"></div><div style="left:0px;top:268px;width:1px;height:23px;background:#FFFFFF;"></div><div style="left:0px;top:291px;width:19px;height:1px;background:#404040;"></div><div style="left:18px;top:268px;width:1px;height:24px;background:#404040;"></div><div style="left:1px;top:290px;width:17px;height:1px;background:#808080;"></div><div style="left:17px;top:269px;width:1px;height:22px;background:#808080;"></div><div class="t" style="left:4px;top:272px;font-size:14px;line-height:16px;color:#808080;font-weight:bold;">8</div><svg style="left:12px;top:276px" width="5" height="7" viewBox="0 0 5 7" shape-rendering="crispEdges"><path d="M0 0l4 3.5l-4 3.5z" fill="#808080"/></svg><div style="left:21px;top:268px;width:44px;height:13px;background:#E0FFE0;"></div><div style="left:21px;top:268px;width:43px;height:1px;background:#808080;"></div><div style="left:21px;top:268px;width:1px;height:12px;background:#808080;"></div><div style="left:21px;top:280px;width:44px;height:1px;background:#FFFFFF;"></div><div style="left:64px;top:268px;width:1px;height:13px;background:#FFFFFF;"></div><div style="left:21px;top:281px;width:44px;height:13px;background:#E0FFE0;"></div><div style="left:21px;top:281px;width:43px;height:1px;background:#808080;"></div><div style="left:21px;top:281px;width:1px;height:12px;background:#808080;"></div><div style="left:21px;top:293px;width:44px;height:1px;background:#FFFFFF;"></div><div style="left:64px;top:281px;width:1px;height:13px;background:#FFFFFF;"></div><div class="t" style="left:3.5px;top:268px;width:80px;text-align:center;font-size:12px;line-height:14px;color:#000;transform:scaleX(0.93);">---</div><div class="t" style="left:3.5px;top:281px;width:80px;text-align:center;font-size:12px;line-height:14px;color:#000;transform:scaleX(0.93);">---</div><div style="left:0px;top:296px;width:64px;height:1px;background:#808080;"></div><div style="left:0px;top:297px;width:64px;height:1px;background:#FFFFFF;"></div><div style="left:0px;top:299px;width:25px;height:24px;background:#D4D0C8;"></div><div style="left:0px;top:299px;width:24px;height:1px;background:#FFFFFF;"></div><div style="left:0px;top:299px;width:1px;height:23px;background:#FFFFFF;"></div><div style="left:0px;top:322px;width:25px;height:1px;background:#404040;"></div><div style="left:24px;top:299px;width:1px;height:24px;background:#404040;"></div><div style="left:1px;top:321px;width:23px;height:1px;background:#808080;"></div><div style="left:23px;top:300px;width:1px;height:22px;background:#808080;"></div><svg style="left:0px;top:298px" width="26" height="26" viewBox="0 0 26 26" shape-rendering="crispEdges"><path d="M4 16.5h3.5v-8h4v8h3" stroke="#808080" fill="none"/><path d="M5 14h5l-2.5-3z" fill="#808080" shape-rendering="auto"/><path d="M16 9l4.2 3.8l-4.2 4z" fill="#808080" shape-rendering="auto"/></svg><div style="left:27px;top:299px;width:38px;height:25px;background:#E0FFE0;"></div><div style="left:27px;top:299px;width:37px;height:1px;background:#808080;"></div><div style="left:27px;top:299px;width:1px;height:24px;background:#808080;"></div><div style="left:27px;top:323px;width:38px;height:1px;background:#FFFFFF;"></div><div style="left:64px;top:299px;width:1px;height:25px;background:#FFFFFF;"></div><div class="t" style="left:6.0px;top:305px;width:80px;text-align:center;font-size:12px;line-height:14px;color:#000;transform:scaleX(0.9);">OFF</div><div style="left:0px;top:325px;width:64px;height:1px;background:#808080;"></div><div style="left:0px;top:326px;width:64px;height:1px;background:#FFFFFF;"></div><div style="left:0px;top:327px;width:65px;height:23px;background:#E0FFE0;"></div><div style="left:0px;top:327px;width:64px;height:1px;background:#808080;"></div><div style="left:0px;top:327px;width:1px;height:22px;background:#808080;"></div><div style="left:0px;top:349px;width:65px;height:1px;background:#FFFFFF;"></div><div style="left:64px;top:327px;width:1px;height:23px;background:#FFFFFF;"></div><div class="t" style="left:-7.0px;top:332px;width:80px;text-align:center;font-size:12px;line-height:14px;color:#000;transform:scaleX(0.85);">3ms</div><div style="left:0px;top:375px;width:65px;height:1px;background:#808080;"></div><div style="left:0px;top:376px;width:65px;height:1px;background:#FFFFFF;"></div><div style="left:65px;top:376px;width:79px;height:1px;background:#808080;"></div><div style="left:68px;top:69px;width:74px;height:304px;background:#D4D0C8;"></div><div style="left:68px;top:69px;width:73px;height:1px;background:#808080;"></div><div style="left:68px;top:69px;width:1px;height:303px;background:#808080;"></div><div style="left:68px;top:372px;width:74px;height:1px;background:#FFFFFF;"></div><div style="left:141px;top:69px;width:1px;height:304px;background:#FFFFFF;"></div><div style="left:69px;top:70px;width:72px;height:245px;background:#E0FFE0;"></div><div style="left:69px;top:70px;width:9px;height:245px;background:#D4D0C8;"></div><div style="left:69px;top:97px;width:72px;height:1px;background:#000;"></div><div class="t" style="left:71px;top:72px;font-size:12px;line-height:14px;color:#000;transform:scaleX(0.85);transform-origin:0 0;">1</div><div style="left:69px;top:124px;width:72px;height:1px;background:#000;"></div><div class="t" style="left:71px;top:99px;font-size:12px;line-height:14px;color:#000;transform:scaleX(0.85);transform-origin:0 0;">2</div><div style="left:69px;top:151px;width:72px;height:1px;background:#000;"></div><div class="t" style="left:71px;top:126px;font-size:12px;line-height:14px;color:#000;transform:scaleX(0.85);transform-origin:0 0;">3</div><div style="left:69px;top:178px;width:72px;height:1px;background:#000;"></div><div class="t" style="left:71px;top:153px;font-size:12px;line-height:14px;color:#000;transform:scaleX(0.85);transform-origin:0 0;">4</div><div style="left:69px;top:205px;width:72px;height:1px;background:#000;"></div><div class="t" style="left:71px;top:180px;font-size:12px;line-height:14px;color:#000;transform:scaleX(0.85);transform-origin:0 0;">5</div><div style="left:69px;top:232px;width:72px;height:1px;background:#000;"></div><div class="t" style="left:71px;top:207px;font-size:12px;line-height:14px;color:#000;transform:scaleX(0.85);transform-origin:0 0;">6</div><div style="left:69px;top:259px;width:72px;height:1px;background:#000;"></div><div class="t" style="left:71px;top:234px;font-size:12px;line-height:14px;color:#000;transform:scaleX(0.85);transform-origin:0 0;">7</div><div style="left:69px;top:286px;width:72px;height:1px;background:#000;"></div><div class="t" style="left:71px;top:261px;font-size:12px;line-height:14px;color:#000;transform:scaleX(0.85);transform-origin:0 0;">8</div><div style="left:69px;top:315px;width:72px;height:1px;background:#000;"></div><div class="t" style="left:82px;top:70px;font-size:12px;line-height:14px;color:#000;transform:scaleX(0.8);transform-origin:0 0;">V</div><div class="t" style="left:88.5px;top:70px;font-size:12px;line-height:14px;color:#000;">:</div><div class="t" style="left:83px;top:83px;font-size:12px;line-height:14px;color:#000;transform:scaleX(0.8);transform-origin:0 0;">V</div><div class="t" style="left:88.5px;top:83px;font-size:12px;line-height:14px;color:#000;">:</div><svg style="left:79px;top:91px" width="5" height="3" viewBox="0 0 5 3" shape-rendering="crispEdges"><path d="M0 3h5l-2.5-3z" fill="#000"/></svg><div class="t" style="left:76.0px;top:70px;width:80px;text-align:center;font-size:12px;line-height:14px;color:#000;transform:scaleX(0.95);">2.110 V</div><div class="t" style="left:76.0px;top:83px;width:80px;text-align:center;font-size:12px;line-height:14px;color:#000;transform:scaleX(0.95);">0.0 V</div><div class="t" style="left:82px;top:97px;font-size:12px;line-height:14px;color:#000;transform:scaleX(0.8);transform-origin:0 0;">V</div><div class="t" style="left:88.5px;top:97px;font-size:12px;line-height:14px;color:#000;">:</div><div class="t" style="left:83px;top:110px;font-size:12px;line-height:14px;color:#000;transform:scaleX(0.8);transform-origin:0 0;">V</div><div class="t" style="left:88.5px;top:110px;font-size:12px;line-height:14px;color:#000;">:</div><svg style="left:79px;top:118px" width="5" height="3" viewBox="0 0 5 3" shape-rendering="crispEdges"><path d="M0 3h5l-2.5-3z" fill="#000"/></svg><div class="t" style="left:76.5px;top:97px;width:80px;text-align:center;font-size:12px;line-height:14px;color:#000;transform:scaleX(0.88);">-38.67 mV</div><div class="t" style="left:76.0px;top:110px;width:80px;text-align:center;font-size:12px;line-height:14px;color:#000;transform:scaleX(0.95);">0.0 V</div><div class="t" style="left:82px;top:124px;font-size:12px;line-height:14px;color:#000;transform:scaleX(0.8);transform-origin:0 0;">V</div><div class="t" style="left:88.5px;top:124px;font-size:12px;line-height:14px;color:#000;">:</div><div class="t" style="left:83px;top:137px;font-size:12px;line-height:14px;color:#000;transform:scaleX(0.8);transform-origin:0 0;">V</div><div class="t" style="left:88.5px;top:137px;font-size:12px;line-height:14px;color:#000;">:</div><svg style="left:79px;top:145px" width="5" height="3" viewBox="0 0 5 3" shape-rendering="crispEdges"><path d="M0 3h5l-2.5-3z" fill="#000"/></svg><div class="t" style="left:76.0px;top:124px;width:80px;text-align:center;font-size:12px;line-height:14px;color:#000;transform:scaleX(0.95);">--.--</div><div class="t" style="left:76.0px;top:137px;width:80px;text-align:center;font-size:12px;line-height:14px;color:#000;transform:scaleX(0.95);">--.--</div><div class="t" style="left:82px;top:151px;font-size:12px;line-height:14px;color:#000;transform:scaleX(0.8);transform-origin:0 0;">V</div><div class="t" style="left:88.5px;top:151px;font-size:12px;line-height:14px;color:#000;">:</div><div class="t" style="left:83px;top:164px;font-size:12px;line-height:14px;color:#000;transform:scaleX(0.8);transform-origin:0 0;">V</div><div class="t" style="left:88.5px;top:164px;font-size:12px;line-height:14px;color:#000;">:</div><svg style="left:79px;top:172px" width="5" height="3" viewBox="0 0 5 3" shape-rendering="crispEdges"><path d="M0 3h5l-2.5-3z" fill="#000"/></svg><div class="t" style="left:76.0px;top:151px;width:80px;text-align:center;font-size:12px;line-height:14px;color:#000;transform:scaleX(0.95);">--.--</div><div class="t" style="left:76.0px;top:164px;width:80px;text-align:center;font-size:12px;line-height:14px;color:#000;transform:scaleX(0.95);">--.--</div><div class="t" style="left:82px;top:178px;font-size:12px;line-height:14px;color:#000;transform:scaleX(0.8);transform-origin:0 0;">V</div><div class="t" style="left:88.5px;top:178px;font-size:12px;line-height:14px;color:#000;">:</div><div class="t" style="left:83px;top:191px;font-size:12px;line-height:14px;color:#000;transform:scaleX(0.8);transform-origin:0 0;">V</div><div class="t" style="left:88.5px;top:191px;font-size:12px;line-height:14px;color:#000;">:</div><svg style="left:79px;top:199px" width="5" height="3" viewBox="0 0 5 3" shape-rendering="crispEdges"><path d="M0 3h5l-2.5-3z" fill="#000"/></svg><div class="t" style="left:76.0px;top:178px;width:80px;text-align:center;font-size:12px;line-height:14px;color:#000;transform:scaleX(0.95);">--.--</div><div class="t" style="left:76.0px;top:191px;width:80px;text-align:center;font-size:12px;line-height:14px;color:#000;transform:scaleX(0.95);">--.--</div><div class="t" style="left:82px;top:205px;font-size:12px;line-height:14px;color:#000;transform:scaleX(0.8);transform-origin:0 0;">V</div><div class="t" style="left:88.5px;top:205px;font-size:12px;line-height:14px;color:#000;">:</div><div class="t" style="left:83px;top:218px;font-size:12px;line-height:14px;color:#000;transform:scaleX(0.8);transform-origin:0 0;">V</div><div class="t" style="left:88.5px;top:218px;font-size:12px;line-height:14px;color:#000;">:</div><svg style="left:79px;top:226px" width="5" height="3" viewBox="0 0 5 3" shape-rendering="crispEdges"><path d="M0 3h5l-2.5-3z" fill="#000"/></svg><div class="t" style="left:76.0px;top:205px;width:80px;text-align:center;font-size:12px;line-height:14px;color:#000;transform:scaleX(0.95);">--.--</div><div class="t" style="left:76.0px;top:218px;width:80px;text-align:center;font-size:12px;line-height:14px;color:#000;transform:scaleX(0.95);">--.--</div><div class="t" style="left:82px;top:232px;font-size:12px;line-height:14px;color:#000;transform:scaleX(0.8);transform-origin:0 0;">V</div><div class="t" style="left:88.5px;top:232px;font-size:12px;line-height:14px;color:#000;">:</div><div class="t" style="left:83px;top:245px;font-size:12px;line-height:14px;color:#000;transform:scaleX(0.8);transform-origin:0 0;">V</div><div class="t" style="left:88.5px;top:245px;font-size:12px;line-height:14px;color:#000;">:</div><svg style="left:79px;top:253px" width="5" height="3" viewBox="0 0 5 3" shape-rendering="crispEdges"><path d="M0 3h5l-2.5-3z" fill="#000"/></svg><div class="t" style="left:76.0px;top:232px;width:80px;text-align:center;font-size:12px;line-height:14px;color:#000;transform:scaleX(0.95);">--.--</div><div class="t" style="left:76.0px;top:245px;width:80px;text-align:center;font-size:12px;line-height:14px;color:#000;transform:scaleX(0.95);">--.--</div><div class="t" style="left:82px;top:259px;font-size:12px;line-height:14px;color:#000;transform:scaleX(0.8);transform-origin:0 0;">V</div><div class="t" style="left:88.5px;top:259px;font-size:12px;line-height:14px;color:#000;">:</div><div class="t" style="left:83px;top:272px;font-size:12px;line-height:14px;color:#000;transform:scaleX(0.8);transform-origin:0 0;">V</div><div class="t" style="left:88.5px;top:272px;font-size:12px;line-height:14px;color:#000;">:</div><svg style="left:79px;top:280px" width="5" height="3" viewBox="0 0 5 3" shape-rendering="crispEdges"><path d="M0 3h5l-2.5-3z" fill="#000"/></svg><div class="t" style="left:76.0px;top:259px;width:80px;text-align:center;font-size:12px;line-height:14px;color:#000;transform:scaleX(0.95);">--.--</div><div class="t" style="left:76.0px;top:272px;width:80px;text-align:center;font-size:12px;line-height:14px;color:#000;transform:scaleX(0.95);">--.--</div><div class="t" style="left:71px;top:288px;font-size:12px;line-height:14px;color:#000;transform:scaleX(0.72);transform-origin:0 0;">E</div><div class="t" style="left:83.5px;top:287px;font-size:12px;line-height:14px;color:#000;">t</div><div class="t" style="left:87.5px;top:287px;font-size:12px;line-height:14px;color:#000;">:</div><svg style="left:79px;top:295px" width="5" height="3" viewBox="0 0 5 3" shape-rendering="crispEdges"><path d="M0 3h5l-2.5-3z" fill="#000"/></svg><div class="t" style="left:76.0px;top:287px;width:80px;text-align:center;font-size:12px;line-height:14px;color:#000;transform:scaleX(0.85);">0.0 s</div><div class="t" style="left:82.5px;top:301px;font-size:12px;line-height:14px;color:#000;transform:scaleX(0.8);transform-origin:0 0;">F</div><div class="t" style="left:87.5px;top:301px;font-size:12px;line-height:14px;color:#000;">:</div><div class="t" style="left:76.0px;top:301px;width:80px;text-align:center;font-size:12px;line-height:14px;color:#000;transform:scaleX(0.85);">0.0 Hz</div><div style="left:0px;top:674px;width:144px;height:1px;background:#808080;"></div><div style="left:0px;top:675px;width:144px;height:1px;background:#FFFFFF;"></div><div style="left:0px;top:718px;width:1024px;height:1px;background:#808080;"></div><div style="left:0px;top:719px;width:1024px;height:1px;background:#FFFFFF;"></div><div style="left:1px;top:677px;width:19px;height:40px;background:#808080;"></div><div style="left:3px;top:680px;width:14px;height:14px;background:#D4D0C8;"></div><div style="left:3px;top:680px;width:13px;height:1px;background:#FFFFFF;"></div><div style="left:3px;top:680px;width:1px;height:13px;background:#FFFFFF;"></div><div style="left:3px;top:693px;width:14px;height:1px;background:#404040;"></div><div style="left:16px;top:680px;width:1px;height:14px;background:#404040;"></div><div style="left:4px;top:692px;width:12px;height:1px;background:#808080;"></div><div style="left:15px;top:681px;width:1px;height:12px;background:#808080;"></div><div style="left:3px;top:695px;width:14px;height:14px;background:#D4D0C8;"></div><div style="left:3px;top:695px;width:13px;height:1px;background:#FFFFFF;"></div><div style="left:3px;top:695px;width:1px;height:13px;background:#FFFFFF;"></div><div style="left:3px;top:708px;width:14px;height:1px;background:#404040;"></div><div style="left:16px;top:695px;width:1px;height:14px;background:#404040;"></div><div style="left:4px;top:707px;width:12px;height:1px;background:#808080;"></div><div style="left:15px;top:696px;width:1px;height:12px;background:#808080;"></div><svg style="left:3px;top:680px" width="14" height="14" viewBox="0 0 14 14" shape-rendering="crispEdges"><path d="M3.5 3.5l7 6M10.5 3.5l-7 6" stroke="#000" stroke-width="2" shape-rendering="auto"/></svg><div class="t" style="left:5px;top:694px;font-size:13px;line-height:16px;color:#000;font-weight:bold;">?</div><div style="left:25px;top:684px;width:31px;height:28px;background:#000;"></div><div style="left:25px;top:712px;width:32px;height:1px;background:#FFFFFF;"></div><div style="left:56px;top:684px;width:1px;height:29px;background:#FFFFFF;"></div><div style="left:27px;top:686px;width:27px;height:24px;background:#D4D0C8;"></div><div style="left:27px;top:686px;width:26px;height:1px;background:#FFFFFF;"></div><div style="left:27px;top:686px;width:1px;height:23px;background:#FFFFFF;"></div><div style="left:27px;top:709px;width:27px;height:1px;background:#808080;"></div><div style="left:53px;top:686px;width:1px;height:24px;background:#808080;"></div><svg style="left:30px;top:689px" width="22" height="20" viewBox="0 0 22 20" shape-rendering="crispEdges"><path d="M4 5.5q0-1.5 1.5-1.5h9l2 -1h2v4h-2l-1 -0.5h-10q-1.5 0 -1.5-1z" fill="#D8D8D8" stroke="#000" stroke-width="0.9" shape-rendering="auto"/><rect x="5" y="4" width="10" height="1.2" fill="#FFFFFF"/><rect x="18" y="2" width="1" height="6" fill="#000"/><rect x="8.5" y="8" width="2" height="6" fill="#B0B0B0" stroke="#000" stroke-width="0.8"/><rect x="15" y="7" width="2" height="7" fill="#B0B0B0" stroke="#000" stroke-width="0.8"/><rect x="8" y="14" width="5" height="3" fill="#0000FF"/><rect x="9" y="14" width="2" height="2" fill="#00FFFF"/><rect x="12" y="14" width="1" height="3" fill="#000"/><rect x="14" y="14" width="5" height="3" fill="#FF0000"/><rect x="15" y="15" width="2" height="2" fill="#FF00FF"/><rect x="18" y="14" width="1" height="3" fill="#000"/></svg><div style="left:59px;top:680px;width:1px;height:34px;background:#808080;"></div><div style="left:60px;top:680px;width:1px;height:34px;background:#FFFFFF;"></div><div class="t" style="left:65px;top:690px;font-size:12px;line-height:14px;color:#000;transform:scaleX(0.92);transform-origin:0 0;">Об.мин:</div><div style="left:106px;top:680px;width:97px;height:35px;background:#E0FFE0;"></div><div style="left:106px;top:680px;width:96px;height:1px;background:#808080;"></div><div style="left:106px;top:680px;width:1px;height:34px;background:#808080;"></div><div style="left:106px;top:714px;width:97px;height:1px;background:#FFFFFF;"></div><div style="left:202px;top:680px;width:1px;height:35px;background:#FFFFFF;"></div><div class="t" style="left:94.5px;top:679px;width:120px;text-align:center;font-size:38px;line-height:38px;color:#000;transform:scaleX(1.05);">747</div><div class="t" style="left:211.5px;top:690px;font-size:12px;line-height:14px;color:#000;">Угол:</div><div style="left:244px;top:680px;width:96px;height:35px;background:#E0FFE0;"></div><div style="left:244px;top:680px;width:95px;height:1px;background:#808080;"></div><div style="left:244px;top:680px;width:1px;height:34px;background:#808080;"></div><div style="left:244px;top:714px;width:96px;height:1px;background:#FFFFFF;"></div><div style="left:339px;top:680px;width:1px;height:35px;background:#FFFFFF;"></div><div class="t" style="left:232.0px;top:679px;width:120px;text-align:center;font-size:38px;line-height:38px;color:#000;transform:scaleX(1.05);">3°</div><div style="left:344px;top:680px;width:35px;height:37px;background:#FFFFFF;"></div><div style="left:344px;top:680px;width:34px;height:1px;background:#808080;"></div><div style="left:344px;top:680px;width:1px;height:36px;background:#808080;"></div><div style="left:345px;top:681px;width:33px;height:35px;background:#D4D0C8;"></div><div style="left:345px;top:681px;width:32px;height:1px;background:#FFFFFF;"></div><div style="left:345px;top:681px;width:1px;height:34px;background:#FFFFFF;"></div><div style="left:345px;top:715px;width:33px;height:1px;background:#404040;"></div><div style="left:377px;top:681px;width:1px;height:35px;background:#404040;"></div><div style="left:346px;top:714px;width:31px;height:1px;background:#808080;"></div><div style="left:376px;top:682px;width:1px;height:33px;background:#808080;"></div><div style="left:382px;top:680px;width:35px;height:37px;background:#FFFFFF;"></div><div style="left:382px;top:680px;width:34px;height:1px;background:#808080;"></div><div style="left:382px;top:680px;width:1px;height:36px;background:#808080;"></div><div style="left:383px;top:681px;width:33px;height:35px;background:#D4D0C8;"></div><div style="left:383px;top:681px;width:32px;height:1px;background:#FFFFFF;"></div><div style="left:383px;top:681px;width:1px;height:34px;background:#FFFFFF;"></div><div style="left:383px;top:715px;width:33px;height:1px;background:#404040;"></div><div style="left:415px;top:681px;width:1px;height:35px;background:#404040;"></div><div style="left:384px;top:714px;width:31px;height:1px;background:#808080;"></div><div style="left:414px;top:682px;width:1px;height:33px;background:#808080;"></div><svg style="left:352px;top:690px" width="16" height="16" viewBox="0 0 16 16" shape-rendering="crispEdges"><circle cx="7" cy="6.5" r="5.6" fill="none" stroke="#000" stroke-width="1.4" shape-rendering="auto"/><path d="M3 4.5a4 4 0 0 1 3-2.5" stroke="#00FFFF" stroke-width="1.4" fill="none" shape-rendering="auto"/><path d="M10 9a4 4 0 0 1-2 2" stroke="#00FFFF" stroke-width="1.4" fill="none" shape-rendering="auto"/><path d="M10.5 10.5l4.5 4" stroke="#000" stroke-width="2.2" shape-rendering="auto"/><rect x="4" y="5.5" width="6" height="2" fill="#000"/><rect x="6" y="3.5" width="2" height="6" fill="#000"/></svg><svg style="left:390px;top:690px" width="16" height="16" viewBox="0 0 16 16" shape-rendering="crispEdges"><circle cx="7" cy="6.5" r="5.6" fill="none" stroke="#000" stroke-width="1.4" shape-rendering="auto"/><path d="M3 4.5a4 4 0 0 1 3-2.5" stroke="#00FFFF" stroke-width="1.4" fill="none" shape-rendering="auto"/><path d="M10 9a4 4 0 0 1-2 2" stroke="#00FFFF" stroke-width="1.4" fill="none" shape-rendering="auto"/><path d="M10.5 10.5l4.5 4" stroke="#000" stroke-width="2.2" shape-rendering="auto"/><rect x="4" y="5.5" width="6" height="2" fill="#000"/></svg><div style="left:418px;top:676px;width:1px;height:42px;background:#808080;"></div><div class="t" style="left:2px;top:724px;font-size:12px;line-height:14px;color:#000;">Готов...</div><div style="left:0px;top:739px;width:1024px;height:1px;background:#FFFFFF;"></div><div style="left:662px;top:722px;width:320px;height:16px;background:#D4D0C8;"></div><div style="left:662px;top:722px;width:319px;height:1px;background:#808080;"></div><div style="left:662px;top:722px;width:1px;height:15px;background:#808080;"></div><div style="left:662px;top:737px;width:320px;height:1px;background:#FFFFFF;"></div><div style="left:981px;top:722px;width:1px;height:16px;background:#FFFFFF;"></div><div class="t" style="left:664px;top:724px;font-size:12px;line-height:14px;color:#000;transform:scaleX(0.94);transform-origin:0 0;">Устройство запущено, кол-во каналов: 2</div><div style="left:984px;top:722px;width:39px;height:1px;background:#808080;"></div><div style="left:984px;top:722px;width:1px;height:15px;background:#808080;"></div><div style="left:984px;top:737px;width:40px;height:1px;background:#FFFFFF;"></div><div style="left:1023px;top:722px;width:1px;height:16px;background:#FFFFFF;"></div><div class="t" style="left:986px;top:724px;font-size:12px;line-height:14px;color:#000;transform:scaleX(0.9);transform-origin:0 0;">0</div></body></html>
